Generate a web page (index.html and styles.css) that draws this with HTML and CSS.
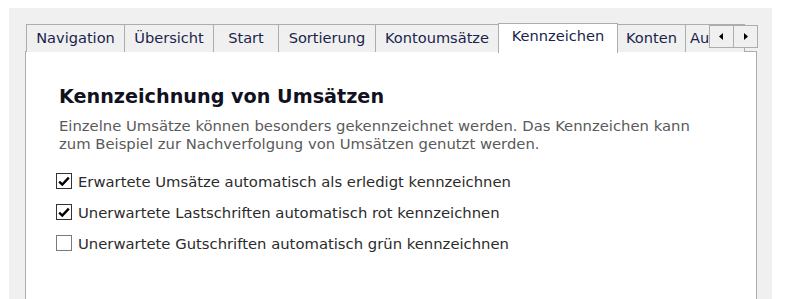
FILE: index.html
```html
<!DOCTYPE html>
<html lang="de">
<head>
<meta charset="utf-8">
<title>Kennzeichen</title>
<link rel="stylesheet" href="styles.css">
</head>
<body>
<div class="frame">
  <div class="tabbar">
    <div class="tabs">
      <div class="tab t-nav">Navigation</div>
      <div class="tab t-ueb">Übersicht</div>
      <div class="tab t-start">Start</div>
      <div class="tab t-sort">Sortierung</div>
      <div class="tab t-konto">Kontoumsätze</div>
      <div class="tab tab-active t-kenn">Kennzeichen</div>
      <div class="tab t-konten">Konten</div>
      <div class="tab t-a">Aus</div>
    </div>
    <div class="scroll">
      <div class="sbtn"><svg width="5" height="7" viewBox="0 0 5 7"><path d="M4 0 L0 3.5 L4 7 Z" fill="#000"/></svg></div>
      <div class="sbtn"><svg width="5" height="7" viewBox="0 0 5 7"><path d="M1 0 L5 3.5 L1 7 Z" fill="#000"/></svg></div>
    </div>
  </div>
  <div class="panel">
    <h1 class="title">Kennzeichnung von Umsätzen</h1>
    <p class="desc">Einzelne Umsätze können besonders gekennzeichnet werden. Das Kennzeichen kann<br>zum Beispiel zur Nachverfolgung von Umsätzen genutzt werden.</p>
    <div class="options">
      <label class="opt"><span class="box checked"><svg width="12" height="11" viewBox="0 0 12 11"><path d="M1.2 5.6 L4.3 8.6 L10.8 1.6" fill="none" stroke="#000" stroke-width="2.4"/></svg></span>Erwartete Umsätze automatisch als erledigt kennzeichnen</label>
      <label class="opt"><span class="box checked"><svg width="12" height="11" viewBox="0 0 12 11"><path d="M1.2 5.6 L4.3 8.6 L10.8 1.6" fill="none" stroke="#000" stroke-width="2.4"/></svg></span>Unerwartete Lastschriften automatisch rot kennzeichnen</label>
      <label class="opt"><span class="box"></span>Unerwartete Gutschriften automatisch grün kennzeichnen</label>
    </div>
  </div>
</div>
</body>
</html>
```
FILE: styles.css
```css
html, body {
  margin: 0;
  padding: 0;
  background: #ffffff;
  height: 100%;
  overflow: hidden;
}
body {
  font-family: "DejaVu Sans", Verdana, sans-serif;
  font-size: 14.8px;
}
.frame {
  margin: 8px 0 0 9px;
  width: 732px;
  height: 276px;
  background: #f0f0f0;
  padding: 15px 15px 0 16px;
  display: flex;
  flex-direction: column;
}
.tabbar {
  position: relative;
  height: 29px;
  z-index: 2;
  margin-bottom: -1px;
}
.tabs {
  display: flex;
  align-items: flex-end;
  height: 30px;
  width: 730px;
  padding-left: 1px;
  overflow: hidden;
}
.tab {
  flex: none;
  box-sizing: border-box;
  height: 28px;
  margin-bottom: 1px;
  border: 1px solid #adadad;
  border-bottom: none;
  margin-right: -1px;
  background: #f0f0f0;
  color: #1a1f4d;
  font-size: 14.6px;
  line-height: 26px;
  text-align: center;
  white-space: nowrap;
  overflow: hidden;
}
.tab-active {
  height: 30px;
  margin-bottom: 0;
  background: #ffffff;
  position: relative;
  z-index: 1;
  line-height: 24px;
}
.t-nav { width: 99px; }
.t-ueb { width: 90px; }
.t-start { width: 66px; }
.t-sort { width: 98px; }
.t-konto { width: 124px; }
.t-kenn { width: 120px; }
.t-konten { width: 69px; }
.t-a { width: 60px; text-align: left; padding-left: 4px; }
.scroll {
  position: absolute;
  left: 684px;
  top: 2px;
  display: flex;
  background: #ffffff;
}
.sbtn {
  box-sizing: border-box;
  width: 25px;
  height: 23px;
  border: 1px solid #adadad;
  margin-right: -1px;
  background: #f0f0f0;
  display: flex;
  align-items: center;
  justify-content: center;
}
.panel {
  flex: 1;
  background: #ffffff;
  border: 1px solid #adadad;
  border-bottom: none;
  padding: 33px 0 0 33px;
}
.title {
  margin: 0;
  font-family: "DejaVu Sans", Verdana, sans-serif;
  font-weight: bold;
  font-size: 19.2px;
  line-height: 24px;
  color: #111122;
}
.desc {
  margin: 8px 0 0 0;
  font-size: 14.8px;
  line-height: 18px;
  color: #5a5a5a;
}
.options {
  margin: 20px 0 0 -3px;
  display: flex;
  flex-direction: column;
  gap: 15px;
}
.opt {
  display: flex;
  align-items: center;
  height: 16px;
  color: #2b2b2b;
  font-size: 14.8px;
}
.box {
  box-sizing: border-box;
  width: 16px;
  height: 16px;
  border: 1px solid #333333;
  background: #ffffff;
  margin: 0 6px 0 0;
  display: flex;
  align-items: center;
  justify-content: center;
}
.box:not(.checked) {
  border-color: #7a7a7a;
}
```
